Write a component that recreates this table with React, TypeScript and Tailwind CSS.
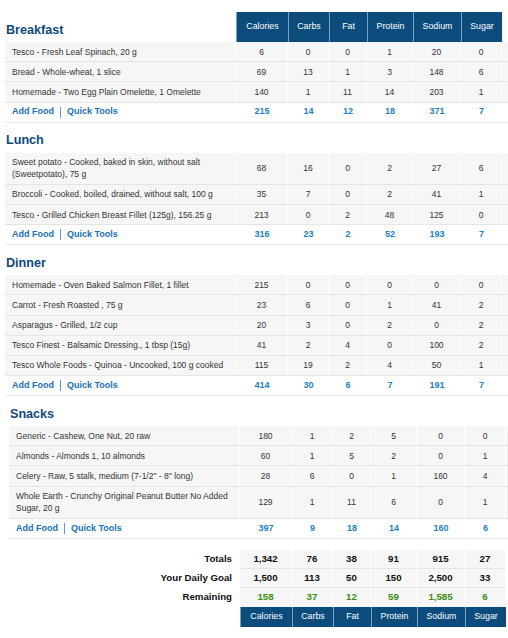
import React from "react";

const W = ["w-[52px]", "w-[41px]", "w-[38px]", "w-[46px]", "w-[48px]", "w-[41px]"];
const HEAD = ["Calories", "Carbs", "Fat", "Protein", "Sodium", "Sugar"];

type Row = { name: string; v: string[] };
type Meal = { title: string; rows: Row[]; totals: string[]; header?: boolean; shift?: boolean };

const meals: Meal[] = [
  {
    title: "Breakfast",
    header: true,
    rows: [
      { name: "Tesco - Fresh Leaf Spinach, 20 g", v: ["6", "0", "0", "1", "20", "0"] },
      { name: "Bread - Whole-wheat, 1 slice", v: ["69", "13", "1", "3", "148", "6"] },
      { name: "Homemade - Two Egg Plain Omelette, 1 Omelette", v: ["140", "1", "11", "14", "203", "1"] },
    ],
    totals: ["215", "14", "12", "18", "371", "7"],
  },
  {
    title: "Lunch",
    rows: [
      { name: "Sweet potato - Cooked, baked in skin, without salt\n(Sweetpotato), 75 g", v: ["68", "16", "0", "2", "27", "6"] },
      { name: "Broccoli - Cooked, boiled, drained, without salt, 100 g", v: ["35", "7", "0", "2", "41", "1"] },
      { name: "Tesco - Grilled Chicken Breast Fillet (125g), 156.25 g", v: ["213", "0", "2", "48", "125", "0"] },
    ],
    totals: ["316", "23", "2", "52", "193", "7"],
  },
  {
    title: "Dinner",
    rows: [
      { name: "Homemade - Oven Baked Salmon Fillet, 1 fillet", v: ["215", "0", "0", "0", "0", "0"] },
      { name: "Carrot - Fresh Roasted , 75 g", v: ["23", "6", "0", "1", "41", "2"] },
      { name: "Asparagus - Grilled, 1/2 cup", v: ["20", "3", "0", "2", "0", "2"] },
      { name: "Tesco Finest - Balsamic Dressing., 1 tbsp (15g)", v: ["41", "2", "4", "0", "100", "2"] },
      { name: "Tesco Whole Foods - Quinoa - Uncooked, 100 g cooked", v: ["115", "19", "2", "4", "50", "1"] },
    ],
    totals: ["414", "30", "6", "7", "191", "7"],
  },
  {
    title: "Snacks",
    shift: true,
    rows: [
      { name: "Generic - Cashew, One Nut, 20 raw", v: ["180", "1", "2", "5", "0", "0"] },
      { name: "Almonds - Almonds 1, 10 almonds", v: ["60", "1", "5", "2", "0", "1"] },
      { name: "Celery - Raw, 5 stalk, medium (7-1/2\" - 8\" long)", v: ["28", "6", "0", "1", "160", "4"] },
      { name: "Whole Earth - Crunchy Original Peanut Butter No Added\nSugar, 20 g", v: ["129", "1", "11", "6", "0", "1"] },
    ],
    totals: ["397", "9", "18", "14", "160", "6"],
  },
];

function HeaderCells({ tall }: { tall: boolean }) {
  return (
    <div className={`flex ${tall ? "h-[30px]" : "h-[20px]"}`}>
      {HEAD.map((h, i) => (
        <div
          key={h}
          className={`${W[i]} flex items-center justify-center bg-[#0b4c7d] border-l border-[#7d9fbf] text-white text-[8.8px]`}
        >
          {h}
        </div>
      ))}
    </div>
  );
}

function MealBlock({ m }: { m: Meal }) {
  return (
    <div className={m.shift ? "ml-[9px]" : "ml-[5px]"}>
      <div className="flex h-[30px]">
        <div className="w-[231px] pt-[10.5px] pl-[1px] text-[12.6px] leading-[15px] font-bold text-[#0d4a7c]">
          {m.title}
        </div>
        {m.header && <HeaderCells tall />}
      </div>
      {m.rows.map((r, idx) => (
        <div key={idx} className="flex border-b border-[#e4e4e4] text-[#333] text-[8.5px] leading-[12px]">
          <div className="w-[231px] shrink-0 bg-[#f6f6f6] border-r border-white pl-[7px] py-[3.6px] whitespace-pre">
            {r.name}
          </div>
          {r.v.map((v, i) => (
            <div
              key={i}
              className={`${W[i]} shrink-0 bg-[#f6f6f6] border-r border-white flex items-center justify-center`}
            >
              {v}
            </div>
          ))}
          <div className="w-[20px] shrink-0 bg-[#f6f6f6]" />
        </div>
      ))}
      <div className="flex h-[20px] border-b border-[#ebebeb] items-center font-bold text-[9px]">
        <div className="w-[231px] shrink-0 pl-[7px] flex items-center text-[#1870b6]">
          <span>Add Food</span>
          <span className="mx-[6px] h-[11px] border-l border-[#5c9ad0]" />
          <span>Quick Tools</span>
        </div>
        {m.totals.map((v, i) => (
          <div key={i} className={`${W[i]} shrink-0 text-center text-[#1c7fc3]`}>
            {v}
          </div>
        ))}
        <div className="w-[20px] shrink-0" />
      </div>
    </div>
  );
}

const summary = [
  { label: "Totals", v: ["1,342", "76", "38", "91", "915", "27"], color: "text-[#111]" },
  { label: "Your Daily Goal", v: ["1,500", "113", "50", "150", "2,500", "33"], color: "text-[#111]" },
  { label: "Remaining", v: ["158", "37", "12", "59", "1,585", "6"], color: "text-[#3a8c14]" },
];

export default function App() {
  return (
    <div className="w-[508px] h-[638px] overflow-hidden bg-white pt-[12px] font-['Liberation_Sans',Arial,sans-serif]">
      {meals.map((m) => (
        <MealBlock key={m.title} m={m} />
      ))}
      <div className="ml-[9px] mt-[11px]">
        {summary.map((s, si) => (
          <div key={s.label} className="flex h-[19px] text-[9.7px] font-bold">
            <div className="w-[231px] shrink-0 flex items-center justify-end pr-[8px] text-[#111]">
              {s.label}
            </div>
            {s.v.map((v, i) => (
              <div
                key={i}
                className={`${W[i]} shrink-0 bg-[#f6f6f6] border-r border-white ${si < 2 ? "border-b border-b-[#e6e6e6]" : ""} flex items-center justify-center ${s.color}`}
              >
                {v}
              </div>
            ))}
          </div>
        ))}
        <div className="flex">
          <div className="w-[231px] shrink-0" />
          <HeaderCells tall={false} />
        </div>
      </div>
    </div>
  );
}
